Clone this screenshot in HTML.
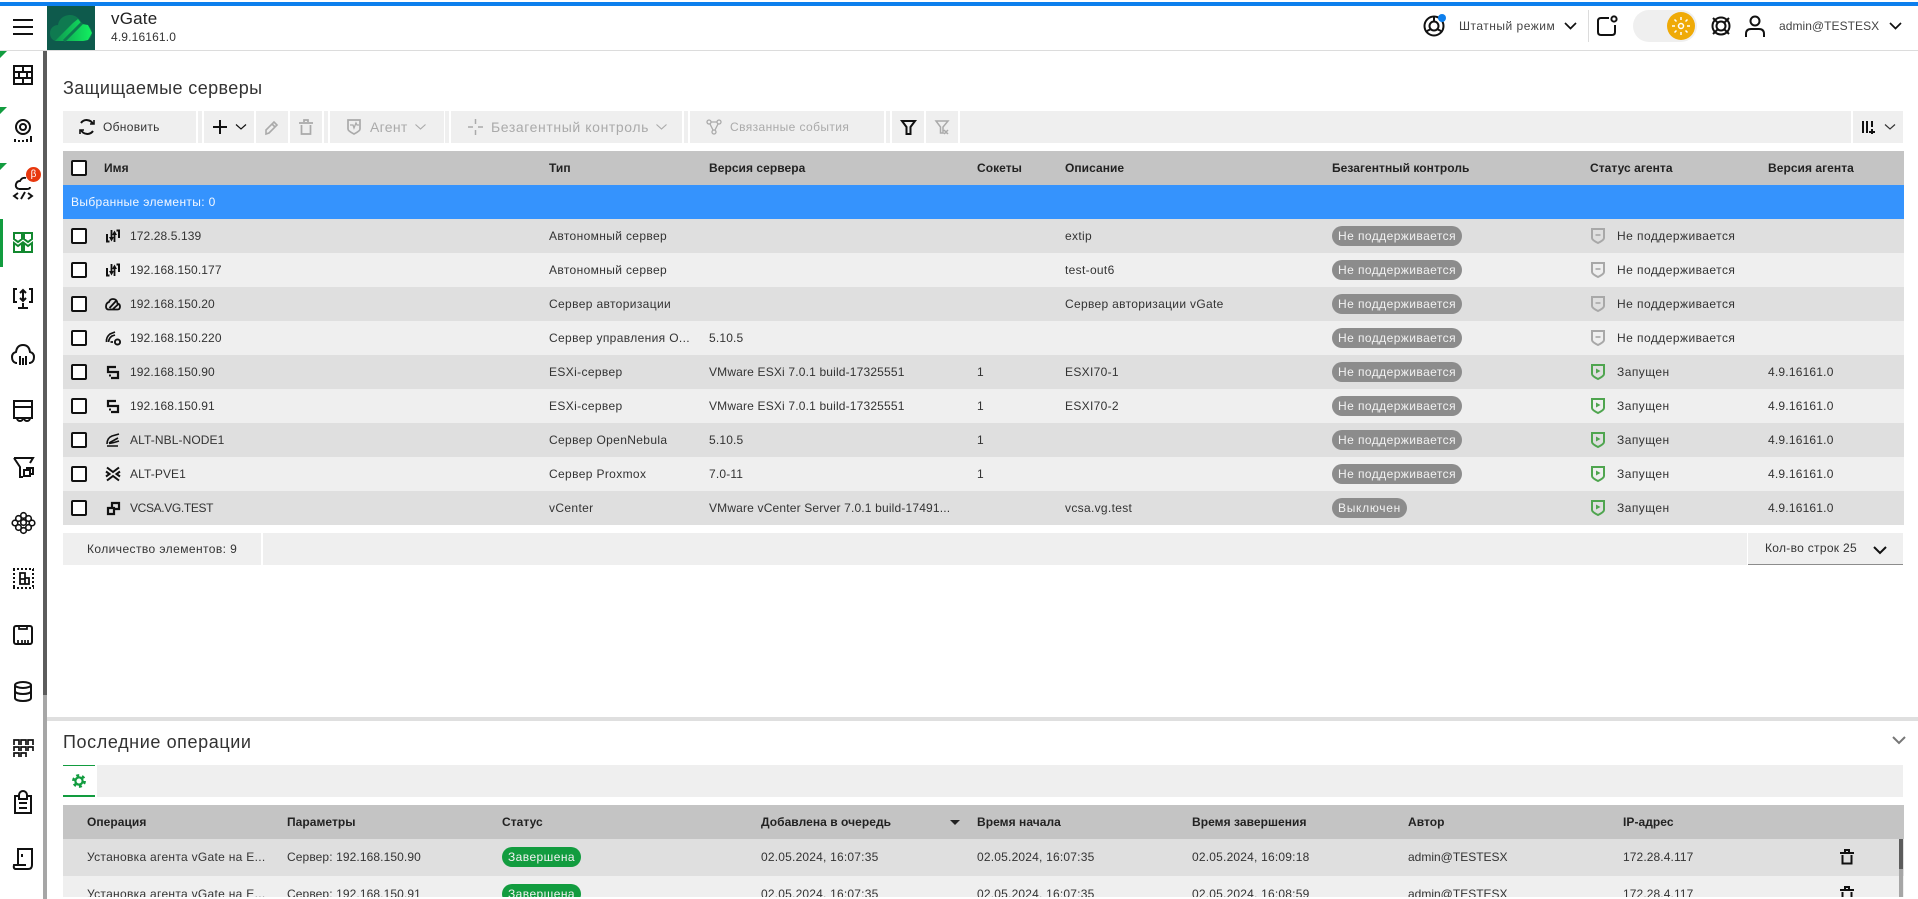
<!DOCTYPE html>
<html lang="ru"><head><meta charset="utf-8"><title>vGate</title>
<style>
*{box-sizing:border-box}
html,body{margin:0;padding:0;width:1918px;height:899px;overflow:hidden;background:#fff}
body{position:relative;font-family:"Liberation Sans",Arial,sans-serif;font-size:12px;color:#333}
.a{position:absolute}
.g{position:absolute;background:#efefef}
svg{position:absolute;overflow:visible;fill:none;stroke:#111;stroke-width:2}
.t{position:absolute;white-space:nowrap;line-height:16px}
.r{position:absolute;left:63px;width:1841px;height:34px}
.r.o{background:#dfdfdf}.r.e{background:#efefef}
.r .t{top:9px;letter-spacing:.1px}
.cb{position:absolute;left:8px;top:9px;width:16px;height:16px;background:#fff;border:2px solid #111;border-radius:2px}
.n{left:67px}
.r .ty{left:486px;letter-spacing:.36px}
.r .v{left:646px;letter-spacing:.17px}
.s{left:914px}
.r .d{left:1002px;letter-spacing:.32px}
.r .st{left:1554px;letter-spacing:.45px}
.r .av{left:1705px;letter-spacing:.2px}
.p{position:absolute;left:1269px;top:7px;height:20px;border-radius:10px;background:#8c8c8c;color:#f2f2f2;line-height:20px;padding:0 6px;font-size:12px;white-space:nowrap;letter-spacing:.43px}
.ic{left:42px;top:9px;width:16px;height:16px}
.sh{left:1527px;top:8px;width:16px;height:18px}
.h{position:absolute;font-weight:bold;color:#222;white-space:nowrap;line-height:16px;letter-spacing:.05px}
.q{position:absolute;left:63px;width:1841px;height:37px}
.q .t{top:10px;letter-spacing:.25px}
</style></head><body>

<svg width="0" height="0" style="position:absolute"><defs>
<g id="gr"><path d="M2 2H14V11Q14 13 8 16 2 13 2 11Z" style="stroke:#4fa54f;stroke-width:2"/><path d="M6 5.5V10.5L10.5 8Z" style="stroke:none;fill:#4fa54f"/></g>
<g id="gy"><path d="M2 2H14V11Q14 13 8 16 2 13 2 11Z" style="stroke:#a8a8a8;stroke-width:2"/><path d="M5.5 8H10.5" style="stroke:#a8a8a8;stroke-width:1.6"/></g>
<g id="sync"><path d="M2 6V13.5H4.5M14 10V2.5H11.5" style="stroke-width:2"/><path d="M6.5 2V10M9.5 14V6" style="stroke-width:1.8"/><path d="M4 9H9L6.5 13.5ZM7 7H12L9.5 2.5Z" style="stroke:none;fill:#111"/></g>
<g id="esx"><path d="M11 3H3V8H13V14H6" style="stroke-width:2.2"/><path d="M4 11.5H6" style="stroke-width:2"/></g>
<g id="trash"><path d="M0 4H14M5 3V1H9V3M2.5 6V14.5H11.5V6"/></g>
</defs></svg>

<!-- top bar -->
<div class="a" style="left:0;top:2px;width:1918px;height:4px;background:#0d7fed"></div>
<div class="a" style="left:0;top:50px;width:1918px;height:1px;background:#dcdcdc"></div>
<svg style="left:13px;top:18px" width="20" height="18"><path d="M0 2H20M0 9H20M0 16H20" style="stroke-width:2"/></svg>
<div class="a" style="left:47px;top:6px;width:48px;height:44px;background:#0e5a4c"></div>
<svg style="left:47px;top:6px;stroke:none" width="48" height="44" viewBox="0 0 48 44"><defs><linearGradient id="lg" x1="0" x2="1"><stop offset="0" stop-color="#0e9a50"/><stop offset="1" stop-color="#12f060"/></linearGradient></defs><path d="M10 35C5 35 3 31 3 27 3 22 7 19 11 19 12 12 18 9 23 9 29 9 33 13 35 18 41 18 45 22 45 27 45 32 41 35 36 35Z" fill="#0f7a50" stroke="none"/><path d="M8 35 26 17 31 13 35 18 41 19 45 27 41 34 36 35Z" fill="url(#lg)" stroke="none"/><path d="M17 35 35 17" style="stroke:#0e7a50;stroke-width:3"/></svg>
<div class="t" style="left:111px;top:9px;font-size:17px;line-height:20px;letter-spacing:.2px;color:#222">vGate</div>
<div class="t" style="left:111px;top:29px;font-size:12px;letter-spacing:.15px">4.9.16161.0</div>

<!-- header right -->
<svg style="left:1424px;top:16px" width="20" height="20" viewBox="0 0 20 20"><circle cx="10" cy="10" r="9.5"/><circle cx="10" cy="10" r="4.5"/><path d="M3 15 7 13M17 15 13 13M10 5V1"/></svg>
<div class="a" style="left:1438px;top:14px;width:8px;height:8px;border-radius:4px;background:#0d7fed"></div>
<div class="t" style="left:1459px;top:18px;font-size:12px;letter-spacing:.5px;color:#444">Штатный режим</div>
<svg style="left:1564px;top:22px" width="13" height="8"><path d="M1 1 6.5 6.5 12 1" style="stroke-width:1.7"/></svg>
<div class="a" style="left:1588px;top:10px;width:1px;height:32px;background:#dcdcdc"></div>
<svg style="left:1597px;top:15px" width="21" height="22"><path d="M12 3H4Q1 3 1 6V17Q1 20 4 20H15Q18 20 18 17V10"/><circle cx="17" cy="4" r="2.6"/></svg>
<div class="a" style="left:1633px;top:10px;width:64px;height:32px;border-radius:16px;background:#efefef"></div>
<div class="a" style="left:1667px;top:12px;width:28px;height:28px;border-radius:14px;background:#efaa07"></div>
<svg style="left:1671px;top:16px;stroke:#fff" width="20" height="20"><circle cx="10" cy="10" r="2.5" style="stroke:#fff;stroke-width:1.5"/><path d="M10 1V4M10 16V19M1 10H4M16 10H19M3.5 3.5 5.5 5.5M14.5 14.5 16.5 16.5M16.5 3.5 14.5 5.5M5.5 14.5 3.5 16.5" style="stroke:#fff;stroke-width:1.5"/></svg>
<svg style="left:1710px;top:15px" width="22" height="22"><circle cx="11" cy="11" r="8.5"/><circle cx="11" cy="11" r="4.5"/><path d="M3 3 7.5 7.5M19 3 14.5 7.5M3 19 7.5 14.5M19 19 14.5 14.5"/></svg>
<svg style="left:1745px;top:15px" width="20" height="22"><circle cx="10" cy="6" r="4.5"/><path d="M1 22V19Q1 14 6 14H14Q19 14 19 19V22"/></svg>
<div class="t" style="left:1779px;top:18px;font-size:12px;letter-spacing:.05px;color:#444">admin@TESTESX</div>
<svg style="left:1889px;top:22px" width="13" height="8"><path d="M1 1 6.5 6.5 12 1" style="stroke-width:1.7"/></svg>

<!-- sidebar -->
<div class="a" style="left:43px;top:51px;width:4px;height:644px;background:#5c5c5c"></div>
<div class="a" style="left:43px;top:695px;width:4px;height:204px;background:#a6a6a6"></div>
<svg style="left:0;top:51px;stroke:none" width="8" height="120"><path d="M0 0H7L0 7ZM0 56H7L0 63ZM0 112H7L0 119Z" fill="#129c3f" stroke="none"/></svg>
<div class="a" style="left:0;top:219px;width:3px;height:48px;background:#129c3f"></div>

<svg style="left:13px;top:65px" width="20" height="20"><path d="M1 1H19V19H1ZM1 7H19M1 13H19M10 1V7M6 7V13M14 7V13M10 13V19"/></svg>
<svg style="left:12px;top:119px" width="20" height="23"><circle cx="11" cy="8" r="7"/><circle cx="11" cy="8" r="3"/><path d="M3 23V20M7 23V21M11 23V21M15 23V20M19 23V17"/></svg>
<svg style="left:13px;top:175px" width="20" height="24"><path d="M6 14Q2 13 3 9 4 6 7 6 9 2 13 3M6 14H14Q17 14 17 12" style="stroke-width:1.9"/><path d="M5 18 1 21 5 24M15 18 19 21 15 24M12 17 8 24" style="stroke-width:1.9"/></svg>
<div class="a" style="left:26px;top:167px;width:15px;height:15px;border-radius:8px;background:#e8380e;color:#fff;font-size:10px;line-height:15px;text-align:center">β</div>
<svg style="left:13px;top:232px" width="20" height="21"><path d="M1 1H9V7L5 10 1 7ZM11 1H19V7L15 10 11 7ZM1 11 5 14 9 11V20H1ZM11 11 15 14 19 11V20H11Z" style="stroke:#12882f"/></svg>
<svg style="left:13px;top:288px" width="20" height="21"><path d="M4 1H1V14H4M16 1H19V14H16M10 3V12M7 5 10 2 13 5M7 10 10 13 13 10M10 15V19M5 20H15"/></svg>
<svg style="left:11px;top:344px" width="24" height="22"><path d="M6 19H5Q1 18 1 13 1 9 5 8 6 1 12 1 18 1 19 8 23 9 23 13 23 18 19 19H18"/><path d="M9 12V21M12 14V21M15 12V21"/></svg>
<svg style="left:13px;top:400px" width="20" height="23"><path d="M1 1H19V18H1ZM1 7H19M4 18A3 3 0 0 0 10 18M11 18A3 3 0 0 0 17 18"/></svg>
<svg style="left:13px;top:457px" width="21" height="21"><path d="M1 1H20L17 6M1 1 7 10V20H10M14 13V11H20V17H17"/><rect x="11" y="13" width="6" height="6"/></svg>
<svg style="left:12px;top:512px" width="23" height="22"><g style="stroke-width:1.6"><circle cx="11.5" cy="3.5" r="2.8"/><circle cx="6.5" cy="6.5" r="2.8"/><circle cx="16.5" cy="6.5" r="2.8"/><circle cx="11.5" cy="10.5" r="2.8"/><circle cx="3" cy="11" r="2.8"/><circle cx="20" cy="11" r="2.8"/><circle cx="6.5" cy="15.5" r="2.8"/><circle cx="16.5" cy="15.5" r="2.8"/><circle cx="11.5" cy="18.5" r="2.8"/></g></svg>
<svg style="left:13px;top:568px" width="21" height="21"><path d="M0 1H21M0 20H21M1 1V20M20 1V20" style="stroke-dasharray:2 2"/><path d="M7 16V5H12V10H16V16ZM7 11H12V16" style="stroke-width:1.8"/></svg>
<svg style="left:13px;top:625px" width="20" height="20"><rect x="1" y="1" width="18" height="18" rx="2"/><path d="M6 1V4H14V1M5 15V19M9 15V19M12 15V19M15 15V19" style="stroke-width:1.7"/></svg>
<svg style="left:14px;top:681px" width="18" height="21"><ellipse cx="9" cy="4" rx="8" ry="3"/><path d="M1 4V17C1 19 5 20 9 20 13 20 17 19 17 17V4M1 10C1 12 5 13 9 13 13 13 17 12 17 10"/></svg>
<svg style="left:13px;top:738px" width="20" height="19"><path d="M1 7V2H6V7M8 7V2H13V7M15 7V2H20V7M1 13V9H6V13M8 13V9H13V13M15 13V9H20V13M1 19V15H6V19M8 19V15H13V19" style="stroke-width:1.7"/></svg>
<svg style="left:14px;top:791px" width="18" height="23"><path d="M5 5H1V22H17V5H13M5 8H13V4A2 2 0 0 0 5 4ZM5 12H13M5 17H13"/></svg>
<svg style="left:13px;top:848px" width="20" height="22"><path d="M5 17V1H19V17Q19 21 15 21H3Q0 21 1 17H13"/><path d="M9 6V9"/></svg>

<!-- page title -->
<div class="t" style="left:63px;top:77px;font-size:18px;line-height:22px;letter-spacing:.4px;color:#333">Защищаемые серверы</div>

<!-- toolbar -->
<div class="g" style="left:63px;top:111px;width:133px;height:32px"></div>
<svg style="left:79px;top:119px" width="16" height="16" viewBox="0 0 16 16"><path d="M14 5A7 7 0 0 0 2 4M2 11A7 7 0 0 0 14 12"/><path d="M15 1V5H11M1 15V11H5" style="stroke-width:1.6"/></svg>
<div class="t" style="left:103px;top:119px;font-size:12px;letter-spacing:.3px">Обновить</div>
<div class="g" style="left:198px;top:111px;width:4px;height:32px"></div>
<div class="g" style="left:204px;top:111px;width:50px;height:32px"></div>
<svg style="left:213px;top:120px" width="14" height="14"><path d="M7 0V14M0 7H14"/></svg>
<svg style="left:236px;top:124px" width="10" height="6"><path d="M0 .5 5 5 10 .5" style="stroke-width:1.2"/></svg>
<div class="g" style="left:256px;top:111px;width:32px;height:32px"></div>
<svg style="left:265px;top:120px" width="14" height="15"><path d="M1 14V10L9 2 12 5 4 13ZM7 4 10 7" style="stroke:#aaa;stroke-width:1.6"/></svg>
<div class="g" style="left:290px;top:111px;width:32px;height:32px"></div>
<svg style="left:299px;top:119px" width="14" height="16"><path d="M0 4H14M5 3V1H9V3M2.5 6V15H11.5V6" style="stroke:#aaa;stroke-width:1.7"/></svg>
<div class="g" style="left:324px;top:111px;width:4px;height:32px"></div>
<div class="g" style="left:330px;top:111px;width:114px;height:32px"></div>
<svg style="left:347px;top:119px" width="14" height="16"><path d="M1 1H13V10Q13 12 7 15 1 12 1 10Z" style="stroke:#aaa;stroke-width:1.7"/><path d="M3 6H6L7 9 9 4 10 6H12" style="stroke:#aaa;stroke-width:1.3"/></svg>
<div class="t" style="left:370px;top:119px;font-size:14px;color:#aaa;letter-spacing:.3px">Агент</div>
<svg style="left:415px;top:124px" width="11" height="6"><path d="M.5 .5 5.5 5 10.5 .5" style="stroke:#aaa;stroke-width:1.1"/></svg>
<div class="g" style="left:445px;top:111px;width:4px;height:32px"></div>
<div class="g" style="left:451px;top:111px;width:231px;height:32px"></div>
<svg style="left:468px;top:119px" width="15" height="16"><path d="M7.5 0V5M7.5 11V16M0 8H5M10 8H15" style="stroke:#aaa;stroke-width:1.5"/></svg>
<div class="t" style="left:491px;top:119px;font-size:14px;color:#aaa;letter-spacing:.6px">Безагентный контроль</div>
<svg style="left:656px;top:124px" width="11" height="6"><path d="M.5 .5 5.5 5 10.5 .5" style="stroke:#aaa;stroke-width:1.1"/></svg>
<div class="g" style="left:684px;top:111px;width:4px;height:32px"></div>
<div class="g" style="left:690px;top:111px;width:194px;height:32px"></div>
<svg style="left:706px;top:119px" width="16" height="16"><circle cx="3" cy="3" r="2" style="stroke:#aaa;stroke-width:1.3"/><circle cx="13" cy="3" r="2" style="stroke:#aaa;stroke-width:1.3"/><circle cx="8" cy="13" r="2" style="stroke:#aaa;stroke-width:1.3"/><path d="M4 5 7 11M12 5 9 11M5 3H11" style="stroke:#aaa;stroke-width:1.3"/></svg>
<div class="t" style="left:730px;top:119px;font-size:12px;color:#aaa;letter-spacing:.4px">Связанные события</div>
<div class="g" style="left:886px;top:111px;width:4px;height:32px"></div>
<div class="g" style="left:892px;top:111px;width:32px;height:32px"></div>
<svg style="left:901px;top:120px" width="15" height="15"><path d="M1 1H14L9.5 7V14H5.5V7Z" style="stroke-width:2"/></svg>
<div class="g" style="left:926px;top:111px;width:32px;height:32px"></div>
<svg style="left:935px;top:120px" width="15" height="15"><path d="M1 1H13L8 7V13H5.5V7ZM9 10 13 14M13 10 9 14" style="stroke:#aaa;stroke-width:1.5"/></svg>
<div class="g" style="left:960px;top:111px;width:891px;height:32px"></div>
<div class="g" style="left:1853px;top:111px;width:50px;height:32px"></div>
<svg style="left:1862px;top:120px" width="14" height="14"><path d="M1 1V13M5 1V13M10 1V7M10 9V14M7 12H13" style="stroke-width:2"/></svg>
<svg style="left:1885px;top:124px" width="10" height="6"><path d="M0 .5 5 5 10 .5" style="stroke:#333;stroke-width:1.2"/></svg>

<!-- table head -->
<div class="a" style="left:63px;top:151px;width:1841px;height:34px;background:#c4c4c4"></div>
<div class="cb" style="left:71px;top:160px"></div>
<div class="h" style="left:104px;top:160px">Имя</div>
<div class="h" style="left:549px;top:160px">Тип</div>
<div class="h" style="left:709px;top:160px">Версия сервера</div>
<div class="h" style="left:977px;top:160px">Сокеты</div>
<div class="h" style="left:1065px;top:160px">Описание</div>
<div class="h" style="left:1332px;top:160px">Безагентный контроль</div>
<div class="h" style="left:1590px;top:160px">Статус агента</div>
<div class="h" style="left:1768px;top:160px">Версия агента</div>
<div class="a" style="left:63px;top:185px;width:1841px;height:34px;background:#3593fd"></div>
<div class="t" style="left:71px;top:194px;color:#f4f8ff;letter-spacing:.35px">Выбранные элементы: 0</div>

<!-- rows -->
<div class="r o" style="top:219px"><div class="cb"></div>
<svg class="ic" viewBox="0 0 16 16"><use href="#sync"/></svg>
<div class="t n">172.28.5.139</div><div class="t ty">Автономный сервер</div><div class="t d">extip</div><div class="p">Не поддерживается</div>
<svg class="sh" viewBox="0 0 16 18"><use href="#gy"/></svg>
<div class="t st">Не поддерживается</div></div>

<div class="r e" style="top:253px"><div class="cb"></div>
<svg class="ic" viewBox="0 0 16 16"><use href="#sync"/></svg>
<div class="t n">192.168.150.177</div><div class="t ty">Автономный сервер</div><div class="t d">test-out6</div><div class="p">Не поддерживается</div>
<svg class="sh" viewBox="0 0 16 18"><use href="#gy"/></svg>
<div class="t st">Не поддерживается</div></div>

<div class="r o" style="top:287px"><div class="cb"></div>
<svg class="ic" viewBox="0 0 16 16"><path d="M3 13.5H12.5Q15 13.5 15 10.5 15 8 12.5 7.5 12 3 8 3 5 3 4 6 1 7 1 10.5 1 13 3 13.5ZM4.5 12 11 5M8 13 13.5 8" style="stroke-width:1.8"/></svg>
<div class="t n">192.168.150.20</div><div class="t ty">Сервер авторизации</div><div class="t d">Сервер авторизации vGate</div><div class="p">Не поддерживается</div>
<svg class="sh" viewBox="0 0 16 18"><use href="#gy"/></svg>
<div class="t st">Не поддерживается</div></div>

<div class="r e" style="top:321px"><div class="cb"></div>
<svg class="ic" viewBox="0 0 16 16"><path d="M1.5 12Q1 7 5 4L10 2M3.5 12Q4 8 7 6L10 5M5.5 12H8" style="stroke-width:1.7"/><circle cx="12.5" cy="12" r="2.6" style="stroke-width:1.9"/></svg>
<div class="t n">192.168.150.220</div><div class="t ty">Сервер управления O...</div><div class="t v">5.10.5</div><div class="p">Не поддерживается</div>
<svg class="sh" viewBox="0 0 16 18"><use href="#gy"/></svg>
<div class="t st">Не поддерживается</div></div>

<div class="r o" style="top:355px"><div class="cb"></div>
<svg class="ic" viewBox="0 0 16 16"><use href="#esx"/></svg>
<div class="t n">192.168.150.90</div><div class="t ty">ESXi-сервер</div><div class="t v">VMware ESXi 7.0.1 build-17325551</div><div class="t s">1</div><div class="t d">ESXI70-1</div><div class="p">Не поддерживается</div>
<svg class="sh" viewBox="0 0 16 18"><use href="#gr"/></svg>
<div class="t st">Запущен</div><div class="t av">4.9.16161.0</div></div>

<div class="r e" style="top:389px"><div class="cb"></div>
<svg class="ic" viewBox="0 0 16 16"><use href="#esx"/></svg>
<div class="t n">192.168.150.91</div><div class="t ty">ESXi-сервер</div><div class="t v">VMware ESXi 7.0.1 build-17325551</div><div class="t s">1</div><div class="t d">ESXI70-2</div><div class="p">Не поддерживается</div>
<svg class="sh" viewBox="0 0 16 18"><use href="#gr"/></svg>
<div class="t st">Запущен</div><div class="t av">4.9.16161.0</div></div>

<div class="r o" style="top:423px"><div class="cb"></div>
<svg class="ic" viewBox="0 0 16 16"><path d="M2 14H13M2 12Q2 6 7 4L14 2M4 11 13 6M4 11.5Q8 11 14 9" style="stroke-width:1.6"/></svg>
<div class="t n">ALT-NBL-NODE1</div><div class="t ty">Сервер OpenNebula</div><div class="t v">5.10.5</div><div class="t s">1</div><div class="p">Не поддерживается</div>
<svg class="sh" viewBox="0 0 16 18"><use href="#gr"/></svg>
<div class="t st">Запущен</div><div class="t av">4.9.16161.0</div></div>

<div class="r e" style="top:457px"><div class="cb"></div>
<svg class="ic" viewBox="0 0 16 16"><path d="M2 1.5 8 6 14 1.5M2 14.5 8 10 14 14.5M1 5.5 4.5 8 1 10.5M15 5.5 11.5 8 15 10.5" style="stroke-width:2"/></svg>
<div class="t n">ALT-PVE1</div><div class="t ty">Сервер Proxmox</div><div class="t v">7.0-11</div><div class="t s">1</div><div class="p">Не поддерживается</div>
<svg class="sh" viewBox="0 0 16 18"><use href="#gr"/></svg>
<div class="t st">Запущен</div><div class="t av">4.9.16161.0</div></div>

<div class="r o" style="top:491px"><div class="cb"></div>
<svg class="ic" viewBox="0 0 16 16"><path d="M3 8H9V14H3ZM7 8V3H14V9H9" style="stroke-width:2.2"/></svg>
<div class="t n" style="letter-spacing:-.35px">VCSA.VG.TEST</div><div class="t ty">vCenter</div><div class="t v">VMware vCenter Server 7.0.1 build-17491...</div><div class="t d">vcsa.vg.test</div><div class="p" style="letter-spacing:.7px">Выключен</div>
<svg class="sh" viewBox="0 0 16 18"><use href="#gr"/></svg>
<div class="t st">Запущен</div><div class="t av">4.9.16161.0</div></div>

<!-- footer -->
<div class="g" style="left:63px;top:533px;width:198px;height:32px"></div>
<div class="t" style="left:87px;top:541px;letter-spacing:.42px">Количество элементов: 9</div>
<div class="g" style="left:263px;top:533px;width:1484px;height:32px"></div>
<div class="g" style="left:1748px;top:533px;width:155px;height:32px;border-bottom:1px solid #8c8c8c"></div>
<div class="t" style="left:1765px;top:540px;letter-spacing:.3px">Кол-во строк 25</div>
<svg style="left:1873px;top:546px" width="14" height="8"><path d="M1 1 7 7 13 1"/></svg>

<!-- divider + bottom panel -->
<div class="a" style="left:47px;top:717px;width:1871px;height:4px;background:#dfdfdf"></div>
<div class="t" style="left:63px;top:731px;font-size:18px;line-height:22px;letter-spacing:.6px;color:#333">Последние операции</div>
<svg style="left:1892px;top:736px" width="14" height="8"><path d="M1 1 7 7 13 1" style="stroke:#777"/></svg>
<div class="a" style="left:63px;top:765px;width:32px;height:32px;background:#fff;border-top:1px solid #129c3f;border-bottom:2px solid #129c3f"></div>
<svg style="left:72px;top:774px" width="14" height="14" viewBox="0 0 14 14"><circle cx="7" cy="7" r="3.6" style="stroke:#129c3f;stroke-width:2.2"/><circle cx="7" cy="7" r="5.7" style="stroke:#129c3f;stroke-width:2.4;stroke-dasharray:3 2.97"/></svg>
<div class="g" style="left:97px;top:765px;width:1806px;height:32px"></div>

<div class="a" style="left:63px;top:805px;width:1841px;height:34px;background:#c4c4c4"></div>
<div class="h" style="left:87px;top:814px">Операция</div>
<div class="h" style="left:287px;top:814px">Параметры</div>
<div class="h" style="left:502px;top:814px">Статус</div>
<div class="h" style="left:761px;top:814px">Добавлена в очередь</div>
<div class="a" style="left:950px;top:820px;width:0;height:0;border:5px solid transparent;border-top:5px solid #222;border-bottom:0"></div>
<div class="h" style="left:977px;top:814px">Время начала</div>
<div class="h" style="left:1192px;top:814px">Время завершения</div>
<div class="h" style="left:1408px;top:814px">Автор</div>
<div class="h" style="left:1623px;top:814px">IP-адрес</div>

<div class="a" style="left:0;top:839px;width:1918px;height:58px;overflow:hidden">
<div class="q" style="top:0;background:#dfdfdf">
<div class="t" style="left:24px;letter-spacing:.3px">Установка агента vGate на E...</div><div class="t" style="left:224px;letter-spacing:.1px">Сервер: 192.168.150.90</div>
<div class="p" style="left:439px;top:8px;background:#129c3f">Завершена</div>
<div class="t" style="left:698px;letter-spacing:.2px">02.05.2024, 16:07:35</div><div class="t" style="left:914px;letter-spacing:.2px">02.05.2024, 16:07:35</div><div class="t" style="left:1129px;letter-spacing:.2px">02.05.2024, 16:09:18</div><div class="t" style="left:1345px;letter-spacing:0">admin@TESTESX</div><div class="t" style="left:1560px;letter-spacing:.1px">172.28.4.117</div>
<svg style="left:1777px;top:10px" width="14" height="16"><use href="#trash"/></svg>
</div>
<div class="q" style="top:37px;background:#efefef">
<div class="t" style="left:24px;letter-spacing:.3px">Установка агента vGate на E...</div><div class="t" style="left:224px;letter-spacing:.1px">Сервер: 192.168.150.91</div>
<div class="p" style="left:439px;top:8px;background:#129c3f">Завершена</div>
<div class="t" style="left:698px;letter-spacing:.2px">02.05.2024, 16:07:35</div><div class="t" style="left:914px;letter-spacing:.2px">02.05.2024, 16:07:35</div><div class="t" style="left:1129px;letter-spacing:.2px">02.05.2024, 16:08:59</div><div class="t" style="left:1345px;letter-spacing:0">admin@TESTESX</div><div class="t" style="left:1560px;letter-spacing:.1px">172.28.4.117</div>
<svg style="left:1777px;top:10px" width="14" height="16"><use href="#trash"/></svg>
</div>
</div>
<div class="a" style="left:1899px;top:839px;width:4px;height:30px;background:#5c5c5c"></div>
<div class="a" style="left:1899px;top:869px;width:4px;height:28px;background:#a6a6a6"></div>
</body></html>
